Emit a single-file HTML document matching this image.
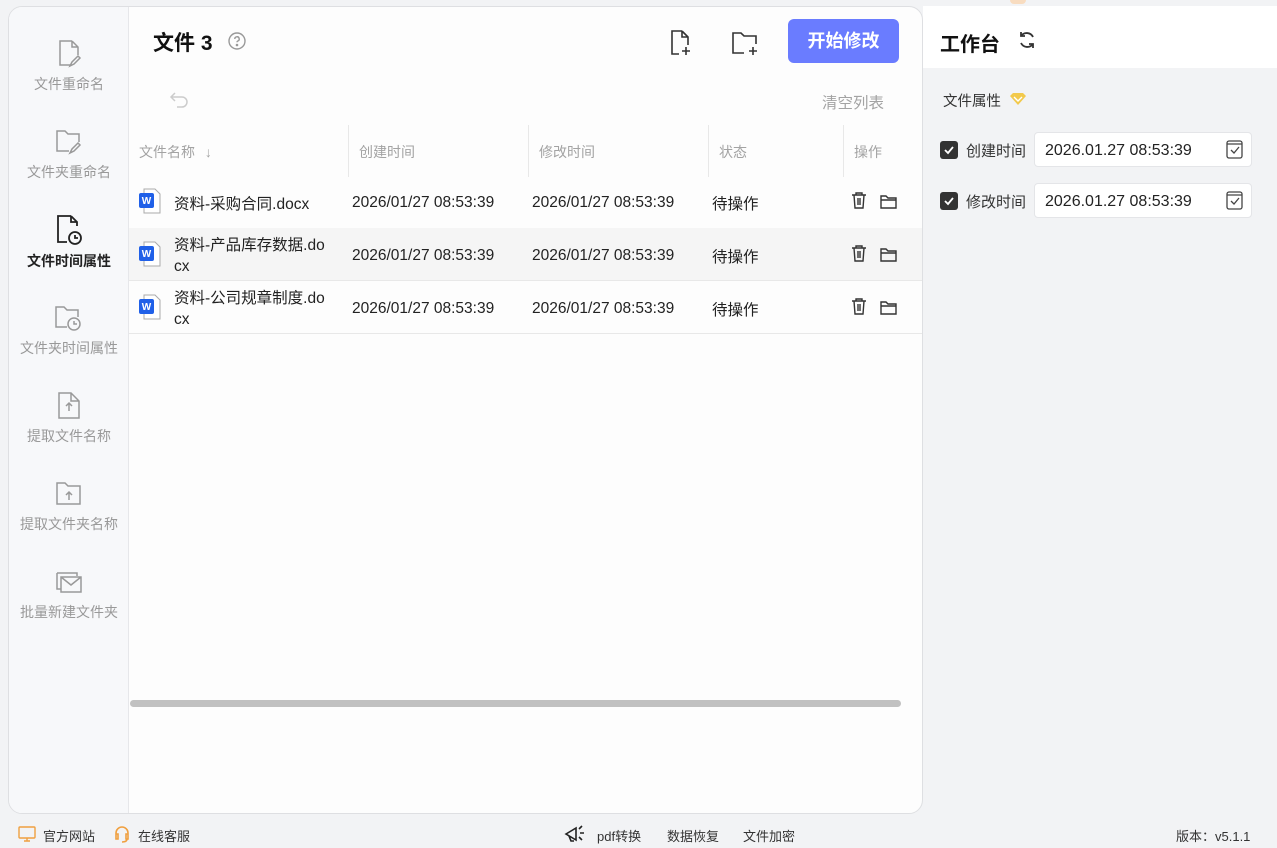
<!DOCTYPE html>
<html><head><meta charset="utf-8"><style>
*{margin:0;padding:0;box-sizing:border-box}
body{width:1277px;height:848px;background:#f2f3f5;font-family:"Liberation Sans","Noto Sans CJK SC",sans-serif;position:relative;overflow:hidden;color:#222}
.abs{position:absolute}
.card{left:8px;top:6px;width:915px;height:808px;background:#fdfdfd;border:1px solid #dedfe2;border-radius:14px;overflow:hidden}
.side{left:0;top:0;width:120px;height:100%;background:#f7f8fa;border-right:1px solid #e6e7ea}
.nav{position:absolute;left:0;width:120px;text-align:center;font-size:14px;color:#999}
.nav svg{display:block;margin:0 auto 5px}
.th{position:absolute;top:135px;font-size:14px;color:#a3a3a3}
.vl{position:absolute;top:118px;width:1px;height:52px;background:#e8e8e8}
.row{position:absolute;left:120px;width:795px;height:53px;border-bottom:1px solid #e8e8e8}
.wico{position:absolute;left:10px;width:22px;height:26px}
.rp{left:923px;top:6px;width:354px;height:62px;background:#fff}
.gp{left:924px;top:68px;width:347px;height:727px;background:#f2f3f5}
.cb{position:absolute;width:18px;height:18px;background:#333;border-radius:3px}
.inp{position:absolute;left:1034px;width:218px;height:35px;background:#fff;border:1px solid #e4e5e8;border-radius:4px;font-size:16px;padding:10px 10px 0;line-height:16px;color:#222}
.ft{position:absolute;top:826px;font-size:13px;color:#333}
.tb{position:absolute;left:120px;top:170px;width:795px;height:160px;font-size:15.5px}
</style></head><body>
<div style="position:absolute;left:1010px;top:0;width:16px;height:4px;background:#f8dcc0;border-radius:0 0 8px 8px"></div>
<div class="abs card">
 <div class="abs side">
  <div class="nav" style="top:32px"><svg width="26" height="30" viewBox="0 0 26 30" fill="none" stroke="#999" stroke-width="1.5"><path d="M16 2H4v24h10M16 2l6 6v8M16 2v6h6"/><path d="M14 27l2-4 6-6 2 2-6 6z"/></svg>文件重命名</div>
  <div class="nav" style="top:120px"><svg width="28" height="30" viewBox="0 0 28 30" fill="none" stroke="#999" stroke-width="1.5"><path d="M14 24H2V4h8l3 3h11v8"/><path d="M15 26l2-4 6-6 2 2-6 6z"/></svg>文件夹重命名</div>
  <div class="nav" style="top:207px;color:#222;font-weight:bold"><svg width="28" height="32" viewBox="0 0 28 32" fill="none" stroke="#222" stroke-width="1.8"><path d="M16 2H3v26h9M16 2l6 6v4M16 2v6h6"/><circle cx="20" cy="24" r="6"/><path d="M20 21v3h3"/></svg>文件时间属性</div>
  <div class="nav" style="top:296px"><svg width="30" height="30" viewBox="0 0 30 30" fill="none" stroke="#999" stroke-width="1.5"><path d="M13 24H2V4h8l3 3h11v7"/><circle cx="20" cy="21" r="6"/><path d="M20 18v3h3"/></svg>文件夹时间属性</div>
  <div class="nav" style="top:384px"><svg width="26" height="30" viewBox="0 0 26 30" fill="none" stroke="#999" stroke-width="1.5"><path d="M15 2H3v25h20V10zM15 2v8h8"/><path d="M13 20v-8M10 15l3-3 3 3"/></svg>提取文件名称</div>
  <div class="nav" style="top:472px"><svg width="28" height="30" viewBox="0 0 28 30" fill="none" stroke="#999" stroke-width="1.5"><path d="M2 4h8l3 3h12v18H2z"/><path d="M14 21v-8M11 16l3-3 3 3"/></svg>提取文件夹名称</div>
  <div class="nav" style="top:560px"><svg width="30" height="30" viewBox="0 0 30 30" fill="none" stroke="#999" stroke-width="1.5"><path d="M3 6h20v3M3 6v16h4"/><path d="M7 10h20v15H7zM7 10l10 8 10-8"/></svg>批量新建文件夹</div>
 </div>
 <div class="abs" style="left:144px;top:20px;font-size:21px;font-weight:bold;color:#111">文件&nbsp;3</div>
 <svg class="abs" style="left:219px;top:25px" width="18" height="18" viewBox="0 0 18 18" fill="none" stroke="#999" stroke-width="1.4"><circle cx="9" cy="9" r="8"/><path d="M6.8 7a2.2 2.2 0 1 1 3 2c-.6.3-.8.7-.8 1.3"/><circle cx="9" cy="13" r=".6" fill="#999"/></svg>
 <svg class="abs" style="left:660px;top:22px" width="24" height="28" viewBox="0 0 24 28" fill="none" stroke="#333" stroke-width="1.6"><path d="M13 2H3v23h7M13 2l6 6v8M13 2v6h6"/><path d="M17 18v8M13 22h8"/></svg>
 <svg class="abs" style="left:722px;top:22px" width="30" height="28" viewBox="0 0 30 28" fill="none" stroke="#333" stroke-width="1.6"><path d="M13 24H2V4h8l3 3h12v8"/><path d="M22 18v8M18 22h8"/></svg>
 <div class="abs" style="left:779px;top:12px;width:111px;height:44px;background:#6a7cff;border-radius:6px;color:#fff;font-size:18px;font-weight:bold;text-align:center;line-height:44px">开始修改</div>
 <svg class="abs" style="left:160px;top:84px" width="22" height="18" viewBox="0 0 22 18" fill="none" stroke="#ccc" stroke-width="1.5"><path d="M6 2L2 6l4 4M2 6h11a5 5 0 0 1 0 10H8"/></svg>
 <div class="abs" style="left:813px;top:84px;font-size:15.5px;color:#a3a3a3">清空列表</div>
 <div class="th" style="left:130px">文件名称 <span style="margin-left:6px">↓</span></div>
 <div class="vl" style="left:339px"></div><div class="th" style="left:350px">创建时间</div>
 <div class="vl" style="left:519px"></div><div class="th" style="left:530px">修改时间</div>
 <div class="vl" style="left:699px"></div><div class="th" style="left:710px">状态</div>
 <div class="vl" style="left:834px"></div><div class="th" style="left:845px">操作</div>
 <div class="row" style="top:170px"></div>
 <div class="row" style="top:221px;background:#f5f5f5"></div>
 <div class="row" style="top:274px"></div>
 <div class="tb">
  <svg class="wico" style="top:11px" viewBox="0 0 22 26"><path d="M5 1h11l5 5v19H5z" fill="#fff" stroke="#aaa"/><rect x="0" y="5" width="15" height="15" rx="2" fill="#2060e8"/><text x="7.5" y="16" font-size="10" font-weight="bold" fill="#fff" text-anchor="middle" font-family="Liberation Sans">W</text></svg>
  <span class="abs" style="left:45px;top:15px">资料-采购合同.docx</span>
  <span class="abs" style="left:223px;top:17px">2026/01/27 08:53:39</span>
  <span class="abs" style="left:403px;top:17px">2026/01/27 08:53:39</span>
  <span class="abs" style="left:583px;top:15px">待操作</span>
  <svg class="wico" style="top:64px" viewBox="0 0 22 26"><path d="M5 1h11l5 5v19H5z" fill="#fff" stroke="#aaa"/><rect x="0" y="5" width="15" height="15" rx="2" fill="#2060e8"/><text x="7.5" y="16" font-size="10" font-weight="bold" fill="#fff" text-anchor="middle" font-family="Liberation Sans">W</text></svg>
  <span class="abs" style="left:45px;top:58px;line-height:21px">资料-产品库存数据.do<br>cx</span>
  <span class="abs" style="left:223px;top:70px">2026/01/27 08:53:39</span>
  <span class="abs" style="left:403px;top:70px">2026/01/27 08:53:39</span>
  <span class="abs" style="left:583px;top:68px">待操作</span>
  <svg class="wico" style="top:117px" viewBox="0 0 22 26"><path d="M5 1h11l5 5v19H5z" fill="#fff" stroke="#aaa"/><rect x="0" y="5" width="15" height="15" rx="2" fill="#2060e8"/><text x="7.5" y="16" font-size="10" font-weight="bold" fill="#fff" text-anchor="middle" font-family="Liberation Sans">W</text></svg>
  <span class="abs" style="left:45px;top:111px;line-height:21px">资料-公司规章制度.do<br>cx</span>
  <span class="abs" style="left:223px;top:123px">2026/01/27 08:53:39</span>
  <span class="abs" style="left:403px;top:123px">2026/01/27 08:53:39</span>
  <span class="abs" style="left:583px;top:121px">待操作</span>
 </div>
 <svg class="abs" style="left:842px;top:185px" width="60" height="140" viewBox="0 0 60 140" fill="none" stroke="#333" stroke-width="1.4">
  <g><path d="M1 3h14M5 3V1h6v2M3 3l1 13h8l1-13M7 6v7M9 6v7"/><path d="M30 4h5l2 2h8v10H30z M30 8h15"/></g>
  <g transform="translate(0,53)"><path d="M1 3h14M5 3V1h6v2M3 3l1 13h8l1-13M7 6v7M9 6v7"/><path d="M30 4h5l2 2h8v10H30z M30 8h15"/></g>
  <g transform="translate(0,106)"><path d="M1 3h14M5 3V1h6v2M3 3l1 13h8l1-13M7 6v7M9 6v7"/><path d="M30 4h5l2 2h8v10H30z M30 8h15"/></g>
 </svg>
 <div class="abs" style="left:121px;top:693px;width:771px;height:7px;background:#c1c1c1;border-radius:4px"></div>
</div>
<div class="abs rp"></div>
<div class="abs" style="left:940px;top:28px;font-size:20px;font-weight:bold;color:#111">工作台</div>
<svg class="abs" style="left:1017px;top:30px" width="20" height="20" viewBox="0 0 20 20" fill="none" stroke="#333" stroke-width="1.8"><path d="M16 7a7 7 0 0 0-12-1M4 13a7 7 0 0 0 12 1"/><path d="M4 2v4h4M16 18v-4h-4"/></svg>
<div class="abs gp"></div>
<div class="abs" style="left:943px;top:90px;font-size:14.5px;color:#333">文件属性</div>
<svg class="abs" style="left:1009px;top:92px" width="18" height="14" viewBox="0 0 18 14"><path d="M1 4l3-3h10l3 3-8 9z" fill="#f2c94c"/><path d="M5 5l4 4 4-4" stroke="#fff" stroke-width="1.4" fill="none"/></svg>
<div class="cb" style="left:940px;top:141px"></div><svg class="abs" style="left:943px;top:144px" width="12" height="12" viewBox="0 0 12 12"><path d="M2 6l3 3 5-6" stroke="#fff" stroke-width="1.8" fill="none"/></svg>
<div class="abs" style="left:966px;top:140px;font-size:15px;color:#333">创建时间</div>
<div class="inp" style="top:132px">2026.01.27 08:53:39</div>
<div class="cb" style="left:940px;top:192px"></div><svg class="abs" style="left:943px;top:195px" width="12" height="12" viewBox="0 0 12 12"><path d="M2 6l3 3 5-6" stroke="#fff" stroke-width="1.8" fill="none"/></svg>
<div class="abs" style="left:966px;top:191px;font-size:15px;color:#333">修改时间</div>
<div class="inp" style="top:183px">2026.01.27 08:53:39</div>
<svg class="abs" style="left:1226px;top:140px" width="18" height="20" viewBox="0 0 18 20" fill="none" stroke="#444" stroke-width="1.3"><rect x="1" y="1" width="15" height="17" rx="2"/><path d="M1 4h15M5 10l3 3 5-6"/></svg>
<svg class="abs" style="left:1226px;top:191px" width="18" height="20" viewBox="0 0 18 20" fill="none" stroke="#444" stroke-width="1.3"><rect x="1" y="1" width="15" height="17" rx="2"/><path d="M1 4h15M5 10l3 3 5-6"/></svg>
<svg class="abs" style="left:18px;top:826px" width="18" height="16" viewBox="0 0 18 16" fill="none" stroke="#f0a040" stroke-width="1.4"><rect x="1" y="1" width="16" height="11" rx="1"/><path d="M6 15h6M9 12v3"/></svg>
<div class="ft" style="left:43px">官方网站</div>
<svg class="abs" style="left:114px;top:825px" width="16" height="18" viewBox="0 0 16 18" fill="none" stroke="#f0a040" stroke-width="1.6"><path d="M2 10V8a6 6 0 0 1 12 0v2M2 9h2v5H2zM12 9h2v5h-2zM13 14c0 2-2 3-5 3"/></svg>
<div class="ft" style="left:138px">在线客服</div>
<svg class="abs" style="left:564px;top:824px" width="22" height="20" viewBox="0 0 22 20" fill="none" stroke="#222" stroke-width="1.6"><path d="M2 10l10-6v12zM5 12l2 5h3M15 5l3-3M16 9h4M15 13l3 3"/></svg>
<div class="ft" style="left:597px">pdf转换</div>
<div class="ft" style="left:667px">数据恢复</div>
<div class="ft" style="left:743px">文件加密</div>
<div class="ft" style="left:1176px">版本：v5.1.1</div>
</body></html>
